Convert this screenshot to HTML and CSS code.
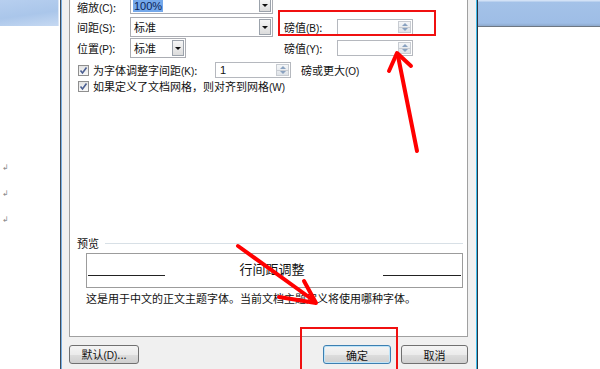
FILE: index.html
```html
<html>
<head>
    <title>字体 - 高级</title>
    <link rel="stylesheet" href="styles.css">
</head>
<body>
    <div class="left-pane">
        <div class="ribbon"></div>
        <div class="marks">
            <span>↲</span>
            <span>↲</span>
            <span>↲</span>
        </div>
    </div>

    <div class="dialog">
        <div class="panel">
            <div class="form">
                <label class="first">缩放<span class="key">(C)</span>:</label>
                <div class="combo first"><span class="value selected">100%</span><span class="drop"></span></div>
                <span></span>
                <span></span>

                <label>间距<span class="key">(S)</span>:</label>
                <div class="combo"><span class="value">标准</span><span class="drop"></span></div>
                <label class="right-label">磅值<span class="key">(B)</span>:</label>
                <div class="spin"><span class="spin-btn"><i class="up"></i><i class="down"></i></span></div>

                <label>位置<span class="key">(P)</span>:</label>
                <div class="combo short"><span class="value">标准</span><span class="drop"></span></div>
                <label class="right-label">磅值<span class="key">(Y)</span>:</label>
                <div class="spin"><span class="spin-btn"><i class="up"></i><i class="down"></i></span></div>
            </div>

            <div class="check-row kerning">
                <span class="checkbox"><svg width="9" height="9" viewBox="0 0 9 9"><path d="M1.5 4.5 L3.5 7 L7.5 1.5" fill="none" stroke="#4b5f92" stroke-width="1.6"/></svg></span>
                <span class="check-text">为字体调整字间距<span class="key">(K)</span>:</span>
                <div class="spin small"><span class="value">1</span><span class="spin-btn"><i class="up"></i><i class="down"></i></span></div>
                <span class="after">磅或更大<span class="key">(O)</span></span>
            </div>
            <div class="check-row grid-row">
                <span class="checkbox"><svg width="9" height="9" viewBox="0 0 9 9"><path d="M1.5 4.5 L3.5 7 L7.5 1.5" fill="none" stroke="#4b5f92" stroke-width="1.6"/></svg></span>
                <span class="check-text">如果定义了文档网格，则对齐到网格<span class="key">(W)</span></span>
            </div>

            <div class="preview-head">
                <span>预览</span>
                <span class="rule"></span>
            </div>
            <div class="preview-box">
                <span class="line"></span>
                <span class="sample">行间距调整</span>
                <span class="line"></span>
            </div>
            <p class="note">这是用于中文的正文主题字体。当前文档主题定义将使用哪种字体。</p>
        </div>

        <div class="buttons">
            <button>默认<span class="key">(D)</span>...</button>
            <button class="ok">确定</button>
            <button class="cancel">取消</button>
        </div>
    </div>

    <div class="right-pane">
        <div class="titlebar"></div>
    </div>

    <!-- red annotations drawn over the screenshot -->
    <svg class="annotations" width="600" height="369" viewBox="0 0 600 369">
        <rect x="279" y="11" width="156" height="24" fill="none" stroke="#f01010" stroke-width="2"/>
        <rect x="301" y="328" width="96" height="50" fill="none" stroke="#f01010" stroke-width="2"/>
        <g fill="none" stroke="#ff0000" stroke-width="4" stroke-linecap="round" stroke-linejoin="round">
            <path d="M417 151 L398 56"/>
            <path d="M389 71 L397 53 L411 66"/>
            <path d="M238 246 L313 300"/>
            <path d="M279 297 L316 303 L304 281"/>
        </g>
    </svg>
</body>
</html>
```

FILE: styles.css
```css
* {
    box-sizing: border-box;
}

body {
    margin: 0;
    width: 600px;
    height: 369px;
    overflow: hidden;
    display: flex;
    position: relative;
    background: #fff;
    font-family: "Noto Sans CJK SC", "Liberation Sans", sans-serif;
    font-size: 11px;
    color: #111;
}

.key {
    font-family: "Liberation Sans", sans-serif;
    font-size: 10px;
}

/* document behind the dialog */
.left-pane {
    width: 60px;
    flex: none;
}

.ribbon {
    width: 59px;
    height: 26px;
    background: linear-gradient(172deg, #b7cfef 0%, #aac6ea 55%, #c6d9f2 100%);
    border-right: 1px solid #dbe6f5;
}

.marks {
    display: flex;
    flex-direction: column;
    gap: 14px;
    margin-top: 136px;
    padding-left: 2px;
    font-family: "DejaVu Sans", sans-serif;
    font-size: 8px;
    line-height: 12px;
    color: #8a8a8a;
}

.right-pane {
    flex: 1;
}

.titlebar {
    height: 27px;
    background: linear-gradient(#d3e2f6 0, #d3e2f6 1px, #a4c2e8 2px, #9ebde6 23px, #8ea9cc 26px);
    border-bottom: 1px solid #6e7782;
}

/* dialog */
.dialog {
    width: 418px;
    flex: none;
    display: flex;
    flex-direction: column;
    background: #f0f0f0;
    border-left: 1px solid #3f4b58;
    border-right: 1px solid #2b3440;
    box-shadow: inset 1px 0 #78afe3, inset -1px 0 #3cbbea;
    padding: 0 9px 0 8px;
}

.panel {
    height: 337px;
    background: #fff;
    border: 1px solid #a0a0a0;
    border-top: none;
    padding: 0 4px 0 7px;
}

/* the list is scrolled: only the lower part of the first row shows */
.form {
    display: grid;
    grid-template-columns: 53px 143px 64px 76px;
    grid-template-rows: 16px 20px 20px;
    row-gap: 1px;
    align-items: center;
}

.form label.first {
    line-height: 16px;
}

.right-label {
    padding-left: 11px;
}

.combo {
    height: 20px;
    display: flex;
    border: 1px solid #abadb3;
    background: #fff;
    padding: 1px;
}

.combo.first {
    height: 14px;
    align-self: start;
    border-top: none;
    padding-top: 0;
}

.combo.short {
    width: 56px;
}

.combo .value {
    flex: 1;
    padding-left: 2px;
    line-height: 16px;
}

.combo .value.selected {
    flex: none;
    align-self: flex-end;
    background: #74a8ea;
    color: #0b2458;
    padding: 0 1px;
    margin-left: 1px;
    line-height: 12px;
    font-family: "Liberation Sans", sans-serif;
    font-size: 11px;
}

.drop {
    width: 12px;
    margin-left: auto;
    border: 1px solid #9ba2ab;
    background: linear-gradient(#f6f6f6, #dcdcdc);
    display: flex;
    align-items: center;
    justify-content: center;
}

.combo.first .drop {
    border-top: none;
}

.drop::after {
    content: "";
    border-left: 3px solid transparent;
    border-right: 3px solid transparent;
    border-top: 3px solid #111;
}

.spin {
    height: 16px;
    display: flex;
    border: 1px solid #b5b8be;
    background: #fff;
    padding: 1px;
}

.spin .value {
    flex: 1;
    padding-left: 3px;
    line-height: 12px;
    font-family: "Liberation Sans", sans-serif;
}

.spin-btn {
    width: 13px;
    margin-left: auto;
    display: flex;
    flex-direction: column;
    border: 1px solid #c8ccd2;
    background: linear-gradient(#f4f6f8, #dfe3e8);
}

.spin-btn i {
    flex: 1;
    display: flex;
    align-items: center;
    justify-content: center;
}

.spin-btn i.up {
    border-bottom: 1px solid #c8ccd2;
}

.spin-btn i.up::after {
    content: "";
    border-left: 3px solid transparent;
    border-right: 3px solid transparent;
    border-bottom: 3px solid #8aa2c0;
}

.spin-btn i.down::after {
    content: "";
    border-left: 3px solid transparent;
    border-right: 3px solid transparent;
    border-top: 3px solid #8aa2c0;
}

.check-row {
    display: flex;
    align-items: center;
}

.check-row.kerning {
    height: 16px;
    margin-top: 4px;
}

.check-row.grid-row {
    height: 14px;
    margin-top: 1px;
}

.checkbox {
    width: 11px;
    height: 11px;
    margin-left: 1px;
    border: 1px solid #8f8f8f;
    background: linear-gradient(#e4e4e4, #f8f8f8);
    display: flex;
    align-items: center;
    justify-content: center;
}

.check-text {
    margin-left: 4px;
}

.kerning .check-text {
    width: 122px;
}

.spin.small {
    width: 76px;
}

.after {
    margin-left: 10px;
}

/* preview */
.preview-head {
    height: 14px;
    margin-top: 143px;
    display: flex;
    align-items: center;
}

.preview-head .rule {
    flex: 1;
    height: 1px;
    margin-left: 6px;
    background: #d8e0e6;
}

.preview-box {
    height: 35px;
    margin: 3px 0 0 9px;
    border: 1px solid #9c9c9c;
    display: grid;
    grid-template-columns: 77px 1fr 78px;
    padding: 0 1px;
}

.preview-box .line {
    height: 1px;
    margin-top: 21px;
    background: #222;
}

.preview-box .sample {
    text-align: center;
    font-size: 13px;
    line-height: 16px;
    margin-top: 7px;
    padding-right: 4px;
}

.note {
    margin: 3px 0 0 9px;
    line-height: 14px;
}

/* button bar */
.buttons {
    flex: 1;
    display: flex;
    gap: 10px;
    padding-top: 8px;
    align-items: flex-start;
}

button {
    height: 19px;
    width: 70px;
    padding: 0;
    font-family: inherit;
    font-size: 11px;
    color: #111;
    border: 1px solid #707070;
    border-radius: 3px;
    background: linear-gradient(#f4f4f4 0%, #ebebeb 50%, #dddddd 51%, #cfcfcf 100%);
    line-height: 16px;
}

button.ok {
    width: 68px;
    margin-left: auto;
    border-color: #3c7fb1;
    box-shadow: inset 0 0 0 1px #bfe4f8;
}

button.cancel {
    width: 67px;
}

.annotations {
    position: absolute;
    top: 0;
    left: 0;
    pointer-events: none;
}
```
